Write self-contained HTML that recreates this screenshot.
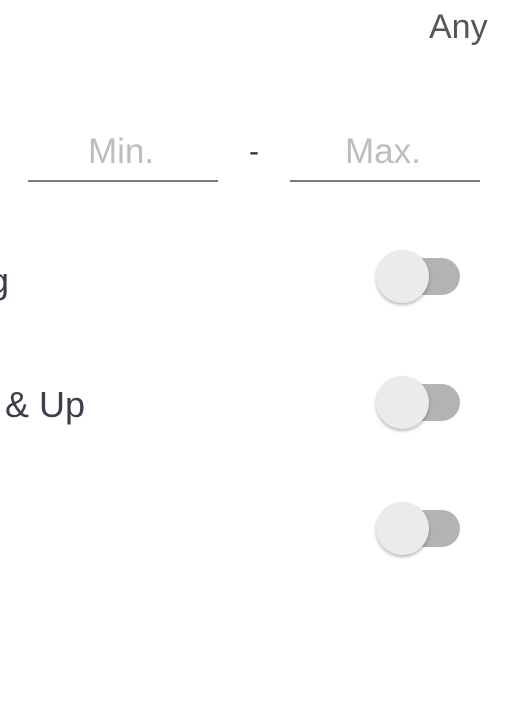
<!DOCTYPE html>
<html><head><style>
body{margin:0;width:524px;height:705px;background:#fff;position:relative;overflow:hidden;font-family:"Liberation Sans",Roboto,sans-serif}
.t{position:absolute;white-space:nowrap;line-height:1}
.line{position:absolute;height:2px;background:#7a7a7a;top:180px}
.track{position:absolute;left:385px;width:75px;height:37px;border-radius:19px;background:#b3b3b3}
.knob{position:absolute;left:376px;width:53px;height:53px;border-radius:50%;background:#ebebeb;box-shadow:0 2px 3px rgba(0,0,0,.28)}
</style></head><body>
<div class="t" style="left:429px;top:10px;font-size:34px;color:#555">Any</div>
<div class="t" style="left:88px;top:134px;font-size:35px;color:#bdbdbd">Min.</div>
<div class="t" style="left:249px;top:137px;font-size:30px;color:#333">-</div>
<div class="t" style="left:345px;top:134px;font-size:35px;color:#bdbdbd">Max.</div>
<div class="line" style="left:28px;width:190px"></div>
<div class="line" style="left:290px;width:190px"></div>
<div class="t" style="left:-11px;top:263px;font-size:36px;color:#3a3f4a">g</div>
<div class="t" style="left:5px;top:387px;font-size:36px;color:#3a3f4a">&amp; Up</div>
<div class="track" style="top:258px"></div><div class="knob" style="top:250px"></div>
<div class="track" style="top:384px"></div><div class="knob" style="top:376px"></div>
<div class="track" style="top:510px"></div><div class="knob" style="top:502px"></div>
</body></html>
